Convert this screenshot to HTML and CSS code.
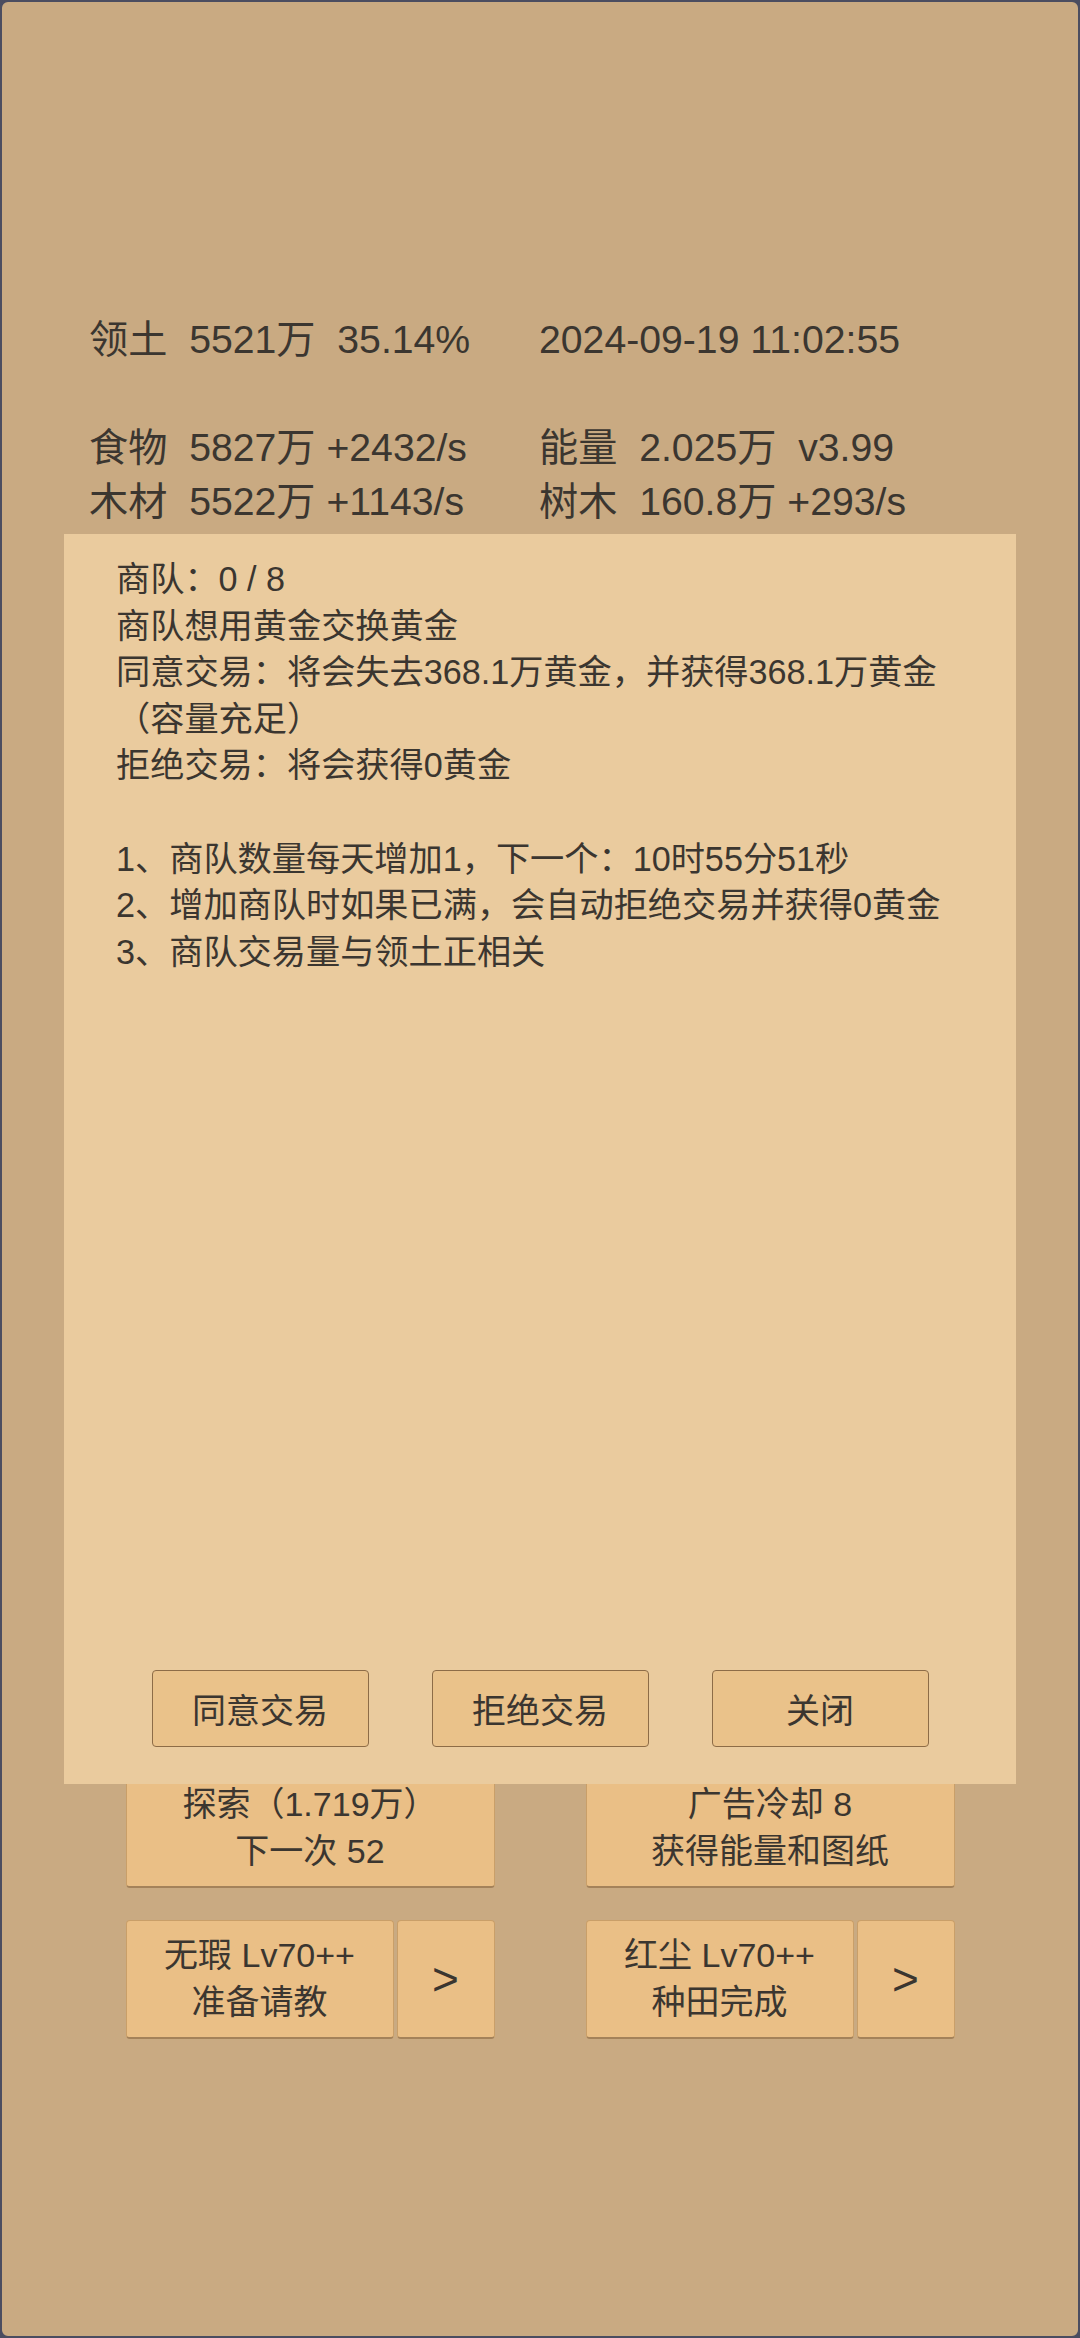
FILE: index.html
```html
<!DOCTYPE html>
<html lang="zh-CN">
<head>
    <meta charset="UTF-8">
    <meta name="viewport" content="width=device-width, initial-scale=1.0">
    <title>商队</title>
    <link rel="stylesheet" href="styles.css">
</head>
<body>
<div class="screen">

    <div class="stats">
        <div class="cell">领土  5521万  35.14%</div>
        <div class="cell">2024-09-19 11:02:55</div>
        <div class="cell"> </div>
        <div class="cell"> </div>
        <div class="cell">食物  5827万 +2432/s</div>
        <div class="cell">能量  2.025万  v3.99</div>
        <div class="cell">木材  5522万 +1143/s</div>
        <div class="cell">树木  160.8万 +293/s</div>
    </div>

    <div class="actions">
        <div class="action-row">
            <button class="btn btn-wide">探索（1.719万）<br>下一次 52</button>
            <button class="btn btn-wide">广告冷却 8<br>获得能量和图纸</button>
        </div>
        <div class="action-row">
            <div class="pair">
                <button class="btn btn-main">无瑕 Lv70++<br>准备请教</button>
                <button class="btn btn-arrow">&gt;</button>
            </div>
            <div class="pair">
                <button class="btn btn-main">红尘 Lv70++<br>种田完成</button>
                <button class="btn btn-arrow">&gt;</button>
            </div>
        </div>
    </div>

    <!-- 商队弹窗 -->
    <div class="dialog">
        <div class="dialog-text">
            <p>商队：0 / 8</p>
            <p>商队想用黄金交换黄金</p>
            <p>同意交易：将会失去368.1万黄金，并获得368.1万黄金<br>（容量充足）</p>
            <p>拒绝交易：将会获得0黄金</p>
            <p>&nbsp;</p>
            <p>1、商队数量每天增加1，下一个：10时55分51秒</p>
            <p>2、增加商队时如果已满，会自动拒绝交易并获得0黄金</p>
            <p>3、商队交易量与领土正相关</p>
        </div>
        <div class="dialog-buttons">
            <button class="dbtn">同意交易</button>
            <button class="dbtn">拒绝交易</button>
            <button class="dbtn">关闭</button>
        </div>
    </div>

</div>
</body>
</html>
```

FILE: styles.css
```css
body {
    margin: 0;
    background-color: #4b4d60;
    font-family: "Liberation Sans", "Noto Sans CJK SC", sans-serif;
    color: #3b3630;
}
.screen {
    position: relative;
    box-sizing: border-box;
    width: 1080px;
    height: 2338px;
    border: 2px solid #4b4d60;
    border-radius: 8px;
    background-color: #c9aa82;
    overflow: hidden;
}

.stats {
    display: grid;
    grid-template-columns: 450px 450px;
    padding: 311px 0 0 87px;
    font-size: 39.2px;
    line-height: 54px;
}
.cell {
    white-space: pre;
}

.actions {
    display: flex;
    flex-direction: column;
    gap: 32px;
    margin-top: 1240px;
}
.action-row {
    display: flex;
    justify-content: center;
    gap: 91px;
}
.pair {
    display: flex;
    gap: 3px;
    width: 369px;
}
.btn {
    height: 119px;
    border: 1px solid #c99f69;
    border-bottom: 2px solid #a4825a;
    border-radius: 4px;
    background-color: #eabf86;
    font-family: "Liberation Sans", "Noto Sans CJK SC", sans-serif;
    font-size: 34px;
    line-height: 47px;
    color: #3b3630;
    padding: 0;
}
.btn-wide {
    width: 369px;
}
.btn-main {
    width: 268px;
}
.btn-arrow {
    width: 98px;
    font-size: 46px;
}

.dialog {
    position: absolute;
    left: 62px;
    top: 532px;
    width: 952px;
    height: 1250px;
    box-sizing: border-box;
    background-color: #eacb9e;
    display: flex;
    flex-direction: column;
    padding: 22px 52px 37px 52px;
}
.dialog-text {
    flex-grow: 1;
    font-size: 34.2px;
    line-height: 46.6px;
}
.dialog-text p {
    margin: 0;
}
.dialog-buttons {
    display: flex;
    justify-content: center;
    gap: 63px;
}
.dbtn {
    width: 217px;
    height: 77px;
    border: 1px solid #8d6c47;
    border-radius: 4px;
    background-color: #eac28a;
    font-family: "Liberation Sans", "Noto Sans CJK SC", sans-serif;
    font-size: 34px;
    color: #3b3630;
    padding: 0;
}
```
